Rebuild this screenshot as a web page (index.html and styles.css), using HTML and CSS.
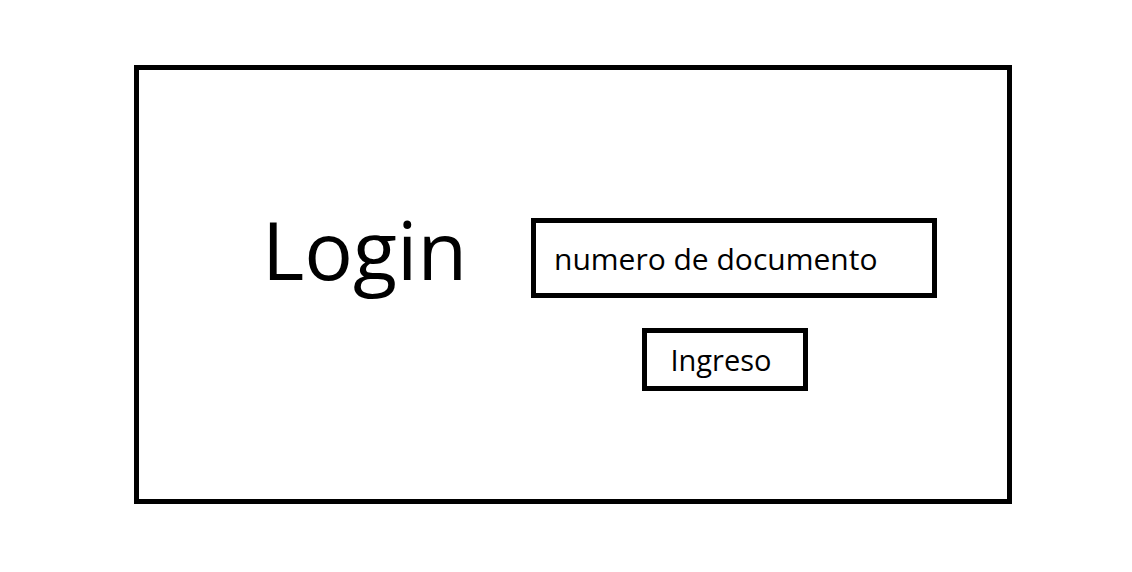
FILE: index.html
```html
<!DOCTYPE html>
<html lang="es">
<head>
    <meta charset="UTF-8">
    <meta name="viewport" content="width=device-width, initial-scale=1.0">
    <title>Login</title>
    <link rel="stylesheet" href="styles.css">
</head>
<body>
    <div class="frame">
        <h1 class="title">Login</h1>
        <form class="login-form" onsubmit="return false;">
            <input type="text" id="documento" class="doc-input" placeholder="numero de documento">
            <button type="submit" class="btn">Ingreso</button>
        </form>
    </div>
</body>
</html>
```

FILE: styles.css
```css
body {
    margin: 0;
    padding: 0;
    background: #fff;
    color: #000;
    font-family: "Open Sans", "Noto Sans", sans-serif;
}

.frame {
    box-sizing: border-box;
    width: 878px;
    height: 439px;
    margin: 65px 0 0 134px;
    padding: 138px 0 0 123px;
    border: 5px solid #000;
    display: grid;
    grid-template-columns: 269px 406px;
    align-items: start;
}

.title {
    margin: 0;
    font-size: 81px;
    font-weight: 400;
    line-height: 1;
}

.login-form {
    margin: 10px 0 0;
    display: flex;
    flex-direction: column;
    align-items: flex-start;
    gap: 30px;
}

.doc-input {
    box-sizing: border-box;
    width: 406px;
    height: 80px;
    padding: 0 0 0 18px;
    border: 5px solid #000;
    border-radius: 0;
    font-family: inherit;
    font-size: 30px;
    color: #000;
    outline: none;
}

.doc-input::placeholder {
    color: #000;
    opacity: 1;
}

.btn {
    box-sizing: border-box;
    width: 166px;
    height: 63px;
    margin-left: 111px;
    padding: 0 8px 0 0;
    border: 5px solid #000;
    border-radius: 0;
    background: #fff;
    font-family: inherit;
    font-size: 29px;
    color: #000;
    cursor: pointer;
}
```
